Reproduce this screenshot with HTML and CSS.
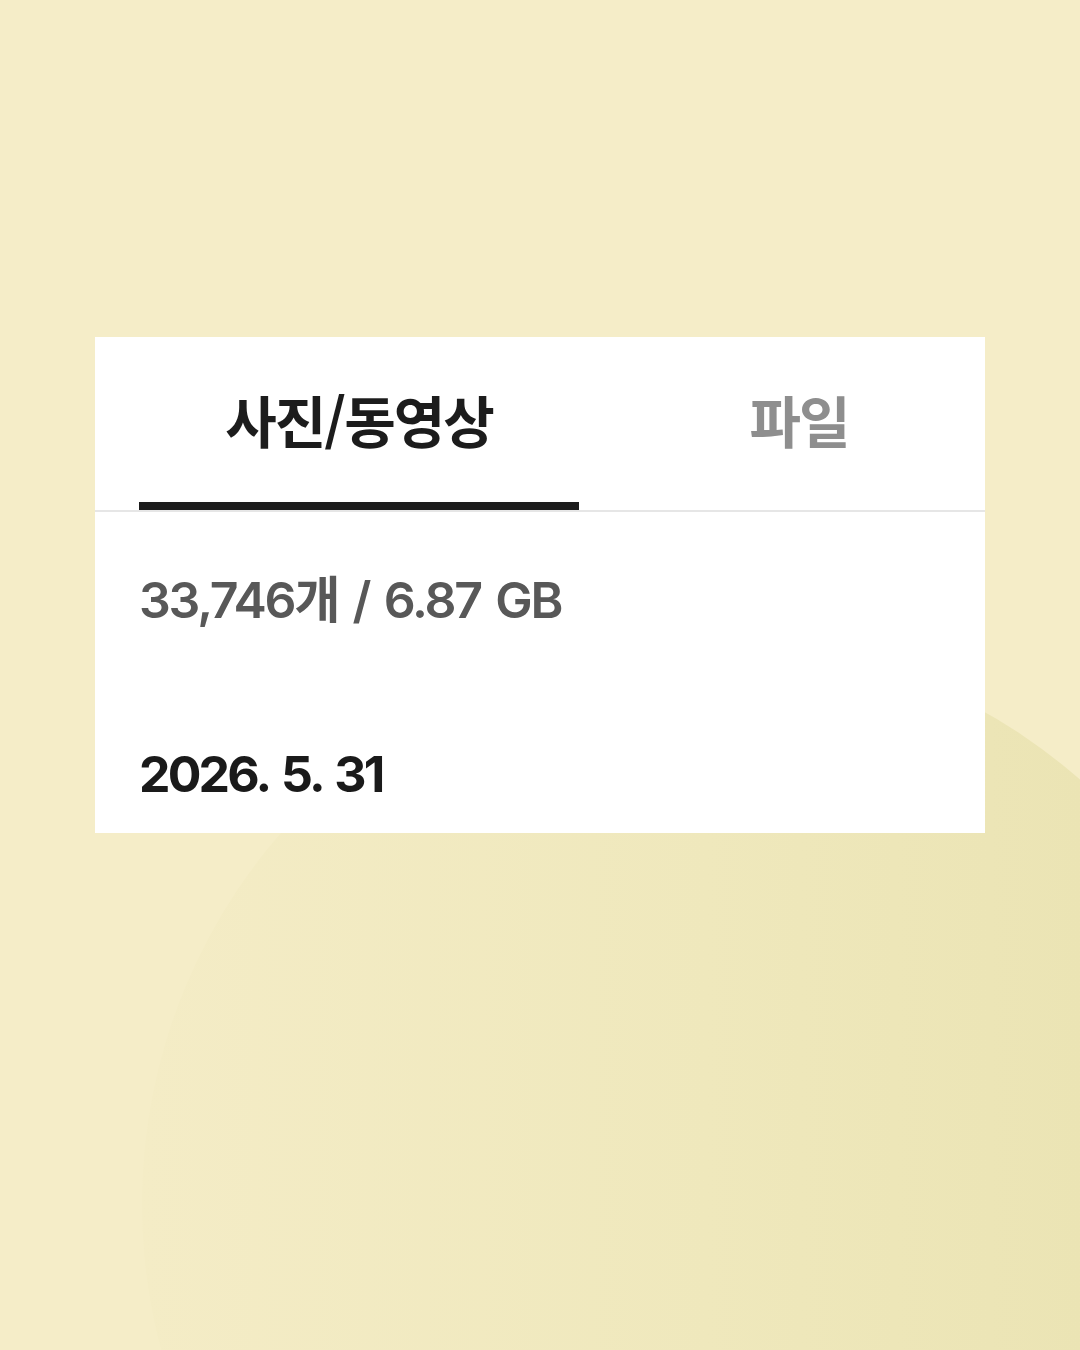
FILE: index.html
```html
<!DOCTYPE html>
<html lang="ko">
<head>
<meta charset="utf-8">
<title>사진/동영상</title>
<link rel="stylesheet" href="styles.css">
</head>
<body>
<div class="page">
  <div class="blob"></div>
  <section class="card">
    <nav class="tabs">
      <div class="tab active">사진/동영상</div>
      <div class="tab">파일</div>
    </nav>
    <div class="content">
      <p class="stats">33,746개 / 6.87 GB</p>
      <p class="date">2026. 5. 31</p>
    </div>
  </section>
</div>
</body>
</html>
```
FILE: styles.css
```css
html, body {
  margin: 0;
  padding: 0;
}
body {
  width: 1080px;
  height: 1350px;
  overflow: hidden;
  background: #f5edc8;
  font-family: Inter, "Noto Sans CJK KR", sans-serif;
}
.page {
  position: relative;
  width: 1080px;
  height: 1350px;
  overflow: hidden;
  padding: 337px 0 0 95px;
  box-sizing: border-box;
}
.blob {
  position: absolute;
  left: 142px;
  top: 639px;
  width: 1130px;
  height: 1130px;
  border-radius: 50%;
  background: linear-gradient(to right, #f4ecc6 0%, #efe8bc 50%, #e9e2b0 100%);
  z-index: 0;
}
.card {
  position: relative;
  z-index: 1;
  width: 890px;
  height: 496px;
  background: #ffffff;
  overflow: hidden;
}
.tabs {
  display: flex;
  padding-left: 44px;
  border-bottom: 2px solid #e6e6e6;
  height: 173px;
  box-sizing: content-box;
}
.tab {
  flex: 0 0 440px;
  display: flex;
  align-items: center;
  justify-content: center;
  box-sizing: border-box;
  font-family: "Noto Sans CJK KR", sans-serif;
  font-weight: 700;
  font-size: 56px;
  letter-spacing: -2px;
  color: #8e8e8e;
  padding-bottom: 10px;
}
.tab.active {
  color: #1c1c1c;
  border-bottom: 8px solid #1c1c1c;
  padding-top: 8px;
  padding-bottom: 10px;
}
.content {
  padding: 58px 0 0 44px;
}
.stats {
  margin: 0;
  font-size: 50px;
  line-height: 60px;
  font-weight: 600;
  color: #585858;
  letter-spacing: -2.2px;
  word-spacing: 4px;
}
.date {
  margin: 114px 0 0 0;
  font-size: 50px;
  line-height: 60px;
  font-weight: 700;
  color: #1a1a1a;
  letter-spacing: -2.8px;
  word-spacing: 4px;
}
```
